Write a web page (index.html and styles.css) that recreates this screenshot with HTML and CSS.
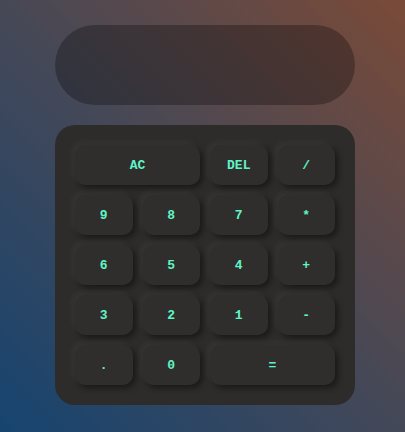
FILE: index.html
```html
<!DOCTYPE html>
<html lang="en">
<head>
<meta charset="utf-8">
<title>Calculator</title>
<link rel="stylesheet" href="styles.css">
</head>
<body>
<main class="calculator">
  <div class="display"></div>
  <div class="keypad">
    <button class="key wide">AC</button>
    <button class="key">DEL</button>
    <button class="key">/</button>
    <button class="key">9</button>
    <button class="key">8</button>
    <button class="key">7</button>
    <button class="key">*</button>
    <button class="key">6</button>
    <button class="key">5</button>
    <button class="key">4</button>
    <button class="key">+</button>
    <button class="key">3</button>
    <button class="key">2</button>
    <button class="key">1</button>
    <button class="key">-</button>
    <button class="key">.</button>
    <button class="key">0</button>
    <button class="key wide">=</button>
  </div>
</main>
</body>
</html>
```
FILE: styles.css
```css
html, body {
  margin: 0;
  height: 100%;
}

body {
  background: linear-gradient(45deg, #164470 0%, #454857 50%, #7a4a38 100%);
  font-family: "Liberation Mono", monospace;
}

.calculator {
  width: 300px;
  padding-top: 25px;
  margin-left: 55px;
  display: flex;
  flex-direction: column;
  gap: 20px;
}

.display {
  height: 80px;
  border-radius: 40px;
  background: rgba(0, 0, 0, 0.28);
}

.keypad {
  background: #2d2c2a;
  border-radius: 20px;
  padding: 20px;
  display: grid;
  grid-template-columns: repeat(4, 1fr);
  grid-auto-rows: 40px;
  gap: 10px;
}

.key {
  border: none;
  border-radius: 10px;
  background: #2f2e2c;
  color: #5ff5c6;
  font-family: "Liberation Mono", monospace;
  font-size: 13px;
  font-weight: bold;
  box-shadow: 3px 3px 6px rgba(0, 0, 0, 0.45), -3px -3px 6px rgba(255, 255, 255, 0.05);
  padding: 0;
}

.key.wide {
  grid-column: span 2;
}
```
